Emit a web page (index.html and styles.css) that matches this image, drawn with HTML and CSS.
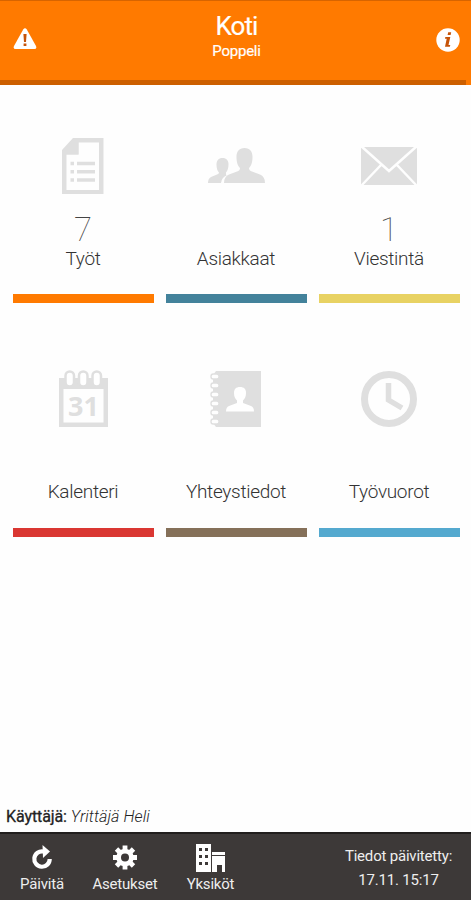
FILE: index.html
```html
<!DOCTYPE html>
<html lang="fi">
<head>
<meta charset="utf-8">
<title>Koti</title>
<link rel="stylesheet" href="styles.css">
</head>
<body>
<div class="app">
  <header class="header">
    <svg class="alert" viewBox="0 0 24 22"><path fill="#fff" d="M10.2 1.500Q12 -.8 13.800 1.500L23 18Q24 21 21.500 21H2.500Q0 21 1 18Z"/><path fill="#c65308" d="M10.400 6h3.200l-.6 8h-2zM10.600 15.500h2.800v2.500h-2.800z"/></svg>
    <div class="heading"><h1>Koti</h1><p>Poppeli</p></div>
    <svg class="info" viewBox="0 0 24 24"><circle cx="12" cy="12" r="11.700" fill="#fff"/><path fill="#c65308" d="M12.200 4.200h3l-.6 2.800h-3zM9.300 9h5l-1.800 8h1.800l-.5 1.700H9l1.700-8H9z"/></svg>
  </header>
  <main class="grid">
    <a class="tile orange">
      <svg class="icon" viewBox="0 0 60 60"><path fill="#dfdfdf" fill-rule="evenodd" d="M20 2h30.500v56H9V14zM25.500 6.500v12H13.500v35.500H46V6.500z"/><path fill="#dfdfdf" d="M20 4h5.500v14.500H11V14z"/><path stroke="#dfdfdf" stroke-width="3.600" d="M17.500 27.500h3.500M17.500 35.700h3.500M17.500 44h3.500M24 27.500h18M24 35.700h18M24 44h18"/></svg>
      <span class="count">7</span><span class="label">Työt</span>
    </a>
    <a class="tile blue">
      <svg class="icon" viewBox="0 0 60 60"><path fill="#dfdfdf" d="M38.500 12c5.500 0 8 3.500 8 9 0 6-1.500 9-3.500 11 0 2 1 3 3 3.500l8 3q5 2 5 8.500H18q0-6.500 5-8.500l8-3c2-.5 3-1.500 3-3.500-2-2-3.500-5-3.500-11 0-5.500 2.500-9 8-9zM16.500 22c4 0 6 2.500 6 6.500s-1.200 6.500-2.500 8v2l.5 1q-5 2-5.500 7.500H2q0-4.500 3-6l6-2.500q2-.5 2-2c-1.500-1.500-2.500-4-2.500-8s2-6.500 6-6.500z"/></svg>
      <span class="count"></span><span class="label">Asiakkaat</span>
    </a>
    <a class="tile yellow">
      <svg class="icon" viewBox="0 0 60 60"><path fill="#dfdfdf" d="M2 11h56v38H2z"/><path fill="none" stroke="#fefefe" stroke-width="2.500" d="M2 10l28 25L58 10M2 50l20-21M58 50L38 29"/></svg>
      <span class="count">1</span><span class="label">Viestintä</span>
    </a>
    <a class="tile red">
      <svg class="icon" viewBox="0 0 60 60"><path fill="#dfdfdf" fill-rule="evenodd" d="M6 9h49v49H6zM10.500 20v33.500h40V20z"/><g fill="#fff" stroke="#dfdfdf" stroke-width="2.500"><rect x="12.500" y="2.500" width="8.500" height="15" rx="4.200"/><rect x="26" y="2.500" width="8.500" height="15" rx="4.200"/><rect x="39.500" y="2.500" width="8.500" height="15" rx="4.200"/></g><text class="date" x="30.500" y="46.500">31</text></svg>
      <span class="count"></span><span class="label">Kalenteri</span>
    </a>
    <a class="tile brown">
      <svg class="icon" viewBox="0 0 60 60"><path fill="#dfdfdf" d="M10 2h45v56H10l-3-4v-48z"/><g fill="#fefefe" stroke="#dfdfdf" stroke-width="1.400"><rect x="5" y="5" width="8" height="5" rx="2.200"/><rect x="5" y="14" width="8" height="5" rx="2.200"/><rect x="5" y="23" width="8" height="5" rx="2.200"/><rect x="5" y="32" width="8" height="5" rx="2.200"/><rect x="5" y="41" width="8" height="5" rx="2.200"/><rect x="5" y="50" width="8" height="5" rx="2.200"/></g><path fill="#fff" d="M34 18c4 0 6 2 6 6s-1.500 6-3 7.500v2.500l8 3q3 1 3 5.500H20q0-4.500 3-5.500l8-3v-2.500c-1.500-1.500-3-3.500-3-7.500s2-6 6-6z"/></svg>
      <span class="count"></span><span class="label">Yhteystiedot</span>
    </a>
    <a class="tile sky">
      <svg class="icon" viewBox="0 0 60 60"><circle cx="30" cy="30" r="24.500" fill="none" stroke="#dfdfdf" stroke-width="7"/><path fill="none" stroke="#dfdfdf" stroke-width="5.500" d="M29.500 14v17L43 39"/></svg>
      <span class="count"></span><span class="label">Työvuorot</span>
    </a>
  </main>
  <p class="user"><b>Käyttäjä:</b> <i>Yrittäjä Heli</i></p>
  <footer class="footer">
    <a class="action refresh"><svg viewBox="0 0 24 28"><path fill="none" stroke="#fff" stroke-width="4.200" d="M13.500 7.500a7.700 7.700 0 1 0 6.200 7.500"/><path fill="#fff" d="M12.500 1l7.500 6.500-7 6.500z"/></svg><span>Päivitä</span></a>
    <a class="action settings"><svg viewBox="0 0 28 28"><g stroke="#fff" stroke-width="4.800"><path d="M14 1.500v24M2 13.500h24M5.500 5l17 17M22.500 5l-17 17"/></g><circle cx="14" cy="13.500" r="8.700" fill="#fff"/><circle cx="14" cy="13.500" r="4" fill="#3d3938"/></svg><span>Asetukset</span></a>
    <a class="action units"><svg viewBox="0 0 30 28"><path fill="#fff" d="M0 0h15v28H0zM16 8h13v3H16zM16 12h13v16h-3v-7h-5v7h-5z"/><path fill="#3d3938" d="M3 4h3v3H3zM9 4h3v3H9zM3 11h3v3H3zM9 11h3v3H9zM3 18h3v3H3zM9 18h3v3H9z"/></svg><span>Yksiköt</span></a>
    <p class="updated"><span>Tiedot päivitetty:</span><span>17.11. 15:17</span></p>
  </footer>
</div>
</body>
</html>
```
FILE: styles.css
```css
* { box-sizing: border-box; }
body { margin: 0; background: #fefefe; font-family: Roboto, "Liberation Sans", sans-serif; color: #444; }
h1, p { margin: 0; font-weight: 400; }
.app { height: 900px; display: flex; flex-direction: column; }
.header { height: 85px; display: flex; justify-content: space-between; padding: 0 11px 0 13px; background: linear-gradient(#cc5f00, #cc5f00) left bottom / 466px 5px no-repeat, #ff7a00; border-top: 1px solid #d76400; color: #fff; }
.header svg { flex: none; }
.alert { width: 24px; height: 22px; margin-top: 27px; }
.info { width: 24px; height: 24px; margin-top: 27px; }
.heading { text-align: center; }
.heading h1 { font-size: 26px; line-height: 30px; margin-top: 10px; letter-spacing: -.9px; -webkit-text-stroke: .2px #fff; }
.heading p { font-size: 15px; line-height: 20px; letter-spacing: -.25px; -webkit-text-stroke: .2px #fff; }
.grid { display: grid; grid-template-columns: repeat(3, 141px); column-gap: 12px; row-gap: 66px; padding: 51px 12px 0 12.500px; }
.tile { height: 167.400px; display: flex; flex-direction: column; align-items: center; border-bottom: 9px solid var(--accent); }
.orange { --accent: #ff7a00; }
.blue { --accent: #43829b; }
.yellow { --accent: #e8d263; }
.red { --accent: #da3732; }
.brown { --accent: #857059; }
.sky { --accent: #54a9cf; }
.icon { width: 60px; height: 60px; flex: none; }
.count { height: 36px; margin-top: 15px; font-size: 33px; line-height: 37px; font-weight: 100; color: #444; }
.label { font-size: 19px; line-height: 24px; letter-spacing: -.3px; font-weight: 300; color: #333; }
.date { font: bold 27px "Noto Sans", sans-serif; fill: #dfdfdf; text-anchor: middle; }
.user { margin-top: auto; padding-left: 6px; height: 25px; font-size: 16px; line-height: 20px; color: #222; }
.user b { font-weight: 400; letter-spacing: -.1px; -webkit-text-stroke: .3px #222; }
.user i { font-weight: 300; letter-spacing: .1px; }
.footer { height: 68px; display: flex; background: #3d3938; border-top: 2px solid #211e1d; color: #eee; }
.action { display: flex; flex-direction: column; align-items: center; padding-top: 10px; font-size: 15px; line-height: 20px; letter-spacing: -.2px; }
.action svg { height: 28px; }
.action span { margin-top: 2px; }
.refresh { width: 84px; }
.settings { width: 82px; }
.units { width: 89px; }
.updated { margin-left: auto; width: 145px; text-align: center; padding-top: 10px; font-size: 15px; line-height: 24px; letter-spacing: -.2px; }
.updated span { display: block; }
```
